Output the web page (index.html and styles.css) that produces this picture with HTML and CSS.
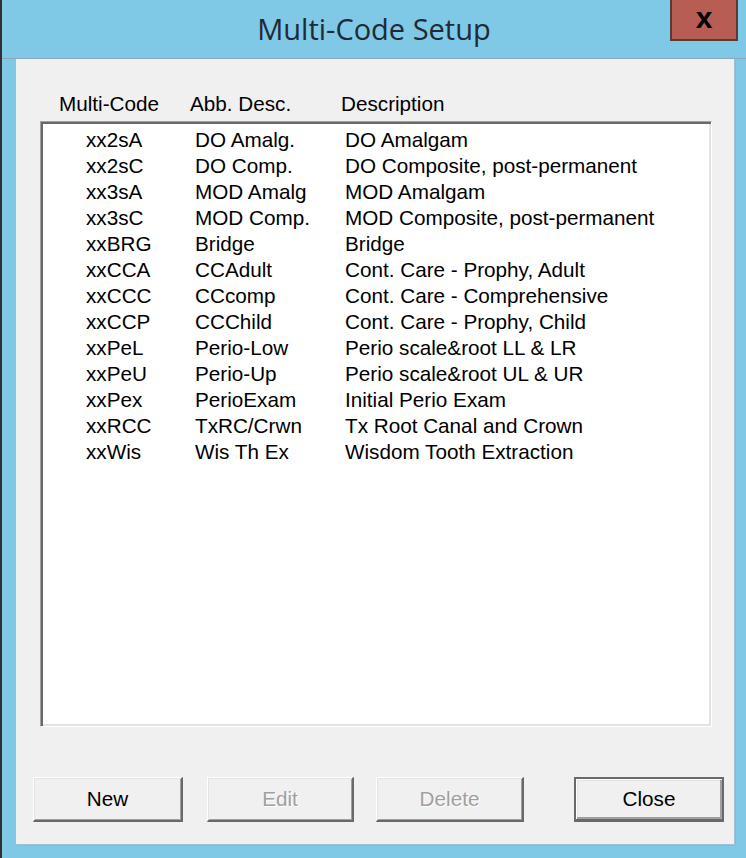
FILE: index.html
```html
<!DOCTYPE html>
<html>
<head>
    <title>Multi-Code Setup</title>
    <link rel="stylesheet" href="styles.css">
</head>
<body>
    <div class="window">
        <div class="titlebar">
            <div></div>
            <div class="title">Multi-Code Setup</div>
            <button class="close-x">x</button>
        </div>

        <div class="panel">
            <div class="list-header">
                <span>Multi-Code</span>
                <span>Abb. Desc.</span>
                <span>Description</span>
            </div>

            <div class="listbox">
                <div class="row"><span>xx2sA</span><span>DO Amalg.</span><span>DO Amalgam</span></div>
                <div class="row"><span>xx2sC</span><span>DO Comp.</span><span>DO Composite, post-permanent</span></div>
                <div class="row"><span>xx3sA</span><span>MOD Amalg</span><span>MOD Amalgam</span></div>
                <div class="row"><span>xx3sC</span><span>MOD Comp.</span><span>MOD Composite, post-permanent</span></div>
                <div class="row"><span>xxBRG</span><span>Bridge</span><span>Bridge</span></div>
                <div class="row"><span>xxCCA</span><span>CCAdult</span><span>Cont. Care - Prophy, Adult</span></div>
                <div class="row"><span>xxCCC</span><span>CCcomp</span><span>Cont. Care - Comprehensive</span></div>
                <div class="row"><span>xxCCP</span><span>CCChild</span><span>Cont. Care - Prophy, Child</span></div>
                <div class="row"><span>xxPeL</span><span>Perio-Low</span><span>Perio scale&amp;root LL &amp; LR</span></div>
                <div class="row"><span>xxPeU</span><span>Perio-Up</span><span>Perio scale&amp;root UL &amp; UR</span></div>
                <div class="row"><span>xxPex</span><span>PerioExam</span><span>Initial Perio Exam</span></div>
                <div class="row"><span>xxRCC</span><span>TxRC/Crwn</span><span>Tx Root Canal and Crown</span></div>
                <div class="row"><span>xxWis</span><span>Wis Th Ex</span><span>Wisdom Tooth Extraction</span></div>
            </div>

            <div class="buttons">
                <button class="btn btn-new">New</button>
                <button class="btn btn-edit" disabled>Edit</button>
                <button class="btn btn-delete" disabled>Delete</button>
                <button class="btn btn-close">Close</button>
            </div>
        </div>
    </div>
</body>
</html>
```

FILE: styles.css
```css
html, body {
    margin: 0;
    padding: 0;
}

body {
    width: 746px;
    height: 858px;
    background-color: #7fc8e6;
    font-family: "Liberation Sans", Arial, sans-serif;
    overflow: hidden;
}

.window {
    height: 858px;
    box-sizing: border-box;
    border-left: 2px solid #2b3137;
}

.titlebar {
    display: grid;
    grid-template-columns: 1fr auto 1fr;
    height: 58px;
    border-bottom: 1px solid #8aa7bf;
}

.title {
    font-family: "Open Sans", "Noto Sans", sans-serif;
    font-size: 29px;
    color: #1f2a36;
    line-height: 58px;
}

.close-x {
    justify-self: end;
    align-self: start;
    width: 68px;
    height: 41px;
    margin-right: 8px;
    padding: 0 0 4px;
    background-color: #b85d53;
    border: 2px solid #573b38;
    border-top: none;
    font-family: "Liberation Sans", Arial, sans-serif;
    font-weight: bold;
    font-size: 30px;
    line-height: 30px;
    color: #000;
}

.panel {
    height: 785px;
    box-sizing: border-box;
    margin: 0 12px 0 14px;
    padding-top: 32px;
    background-color: #f0f0f0;
    box-shadow: 1px 1px 0 #9cc3d6, 2px 2px 0 #8fb6ca;
}

.list-header {
    display: grid;
    grid-template-columns: 131px 151px auto;
    margin-left: 43px;
    font-size: 20.7px;
    line-height: 26px;
    color: #000;
}

.listbox {
    height: 606px;
    box-sizing: border-box;
    margin: 4px 22px 0 24px;
    padding-top: 5px;
    background-color: #fff;
    border-top: 1px solid #a0a0a0;
    border-left: 1px solid #a0a0a0;
    border-right: 1px solid #fff;
    border-bottom: 1px solid #fff;
    box-shadow: inset 2px 2px 0 #696969, inset -2px -2px 0 #e3e3e3;
}

.row {
    display: grid;
    grid-template-columns: 109px 150px 1fr;
    padding-left: 45px;
    font-size: 20.7px;
    line-height: 26px;
    color: #000;
    white-space: nowrap;
}

.buttons {
    display: flex;
    margin: 50px 0 0 17px;
}

.btn {
    width: 148px;
    height: 45px;
    box-sizing: border-box;
    padding: 0;
    background-color: #f0f0f0;
    border-top: 1px solid #fff;
    border-left: 1px solid #fff;
    border-right: 2px solid #696969;
    border-bottom: 2px solid #696969;
    box-shadow: inset 1px 1px 0 #e3e3e3, inset -1px -1px 0 #a0a0a0;
    font-family: "Liberation Sans", Arial, sans-serif;
    font-size: 20.7px;
    color: #000;
}

.btn:disabled {
    color: #a0a0a0;
    text-shadow: 1px 1px 0 #fff;
}

.btn-new {
    width: 150px;
}

.btn-edit {
    width: 147px;
    margin-left: 24px;
}

.btn-delete {
    margin-left: 22px;
}

.btn-close {
    width: 150px;
    margin-left: 50px;
    border: 2px solid #696969;
    border-bottom-width: 3px;
    box-shadow: inset 1px 1px 0 #fff, inset -2px -2px 0 #a0a0a0, inset 2px 2px 0 #e3e3e3;
}
```
